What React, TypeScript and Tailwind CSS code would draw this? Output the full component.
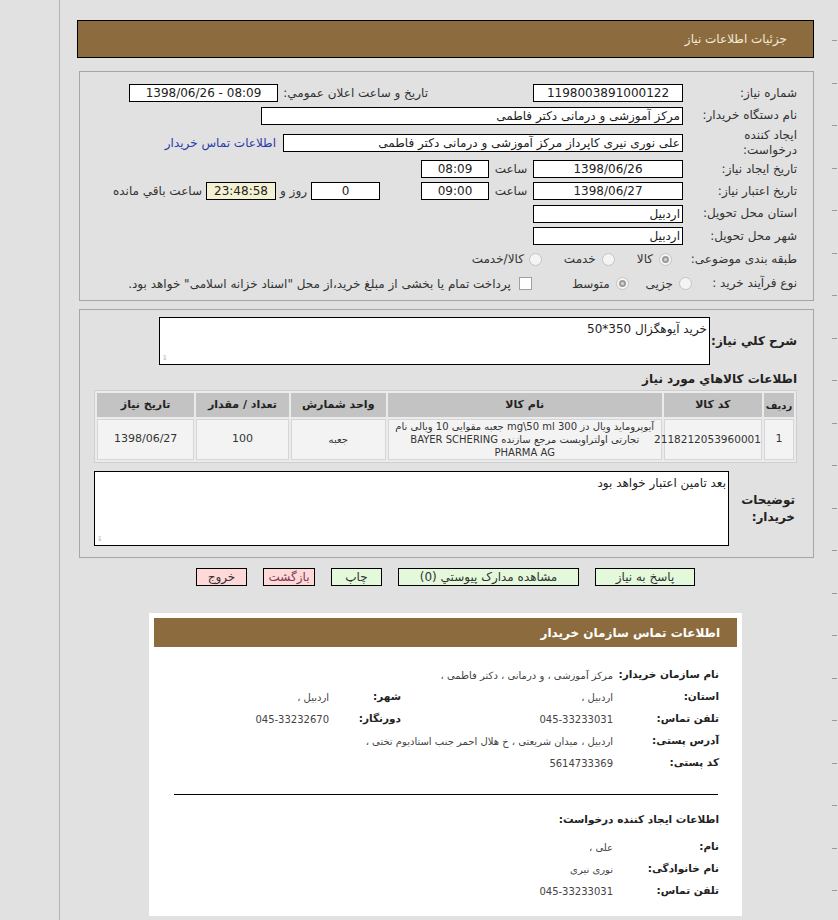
import React from 'react';

const font = "font-['Tahoma','DejaVu_Sans',sans-serif]";

const Box: React.FC<{ w: string; children?: React.ReactNode; align?: 'center' | 'right'; bg?: string }> = ({ w, children, align = 'center', bg = 'bg-white' }) => (
  <div className={`${w} h-[18px] border border-black ${bg} flex items-center px-[2px] text-[12px] text-[#222] leading-none whitespace-nowrap ${align === 'center' ? 'justify-center' : 'justify-start'}`}>
    {children}
  </div>
);

const Radio: React.FC<{ checked?: boolean }> = ({ checked }) => (
  <span className="w-[13px] h-[13px] rounded-full border border-[#c4c4c4] bg-[#f4f4f4] flex items-center justify-center shrink-0">
    {checked && <span className="w-[7px] h-[7px] rounded-full border-2 border-[#9a9a9a] bg-[#d8d8d8]" />}
  </span>
);

const Label: React.FC<{ children: React.ReactNode; w?: string }> = ({ children, w = 'w-[114px]' }) => (
  <div className={`${w} shrink-0 text-[12px] text-[#333] leading-[15px] whitespace-nowrap`}>{children}</div>
);

const InfoRow: React.FC<{ label: string; value: string; label2?: string; value2?: string }> = ({ label, value, label2, value2 }) => (
  <div className="flex items-center h-[22px]">
    <div className="w-[106px] shrink-0 text-[10.5px] font-bold text-[#222] whitespace-nowrap">{label}</div>
    <div className="w-[212px] shrink-0 text-[10px] text-[#444]">{value}</div>
    {label2 && <div className="w-[72px] shrink-0 text-[10.5px] font-bold text-[#222]">{label2}</div>}
    {value2 && <div className="text-[10px] text-[#444]">{value2}</div>}
  </div>
);

const Grip = () => (
  <span className="absolute left-[3px] bottom-[2px] text-[7px] leading-[7px] text-[#aaa] tracking-[-1px]">⁞⁞</span>
);

export default function App() {
  const cols = [
    { t: 'ردیف', w: 'w-[30px]' },
    { t: 'کد کالا', w: 'w-[98px]' },
    { t: 'نام کالا', w: 'w-[273px]' },
    { t: 'واحد شمارش', w: 'w-[95px]' },
    { t: 'تعداد / مقدار', w: 'w-[92px]' },
    { t: 'تاریخ نیاز', w: 'w-[97px]' },
  ];
  const ticks = Array.from({ length: 21 });

  return (
    <div className={`min-h-[920px] bg-[#e1e1e1] flex ${font}`}>
      <div className="w-[60px] shrink-0 border-r border-[#b2b2b2]" />
      <div dir="rtl" className="flex-1 pl-[17px] pt-[20px] pb-[20px]">
        {/* header */}
        <div className="h-[38px] border border-black bg-[#8c6c3f] flex items-center pr-[26px] text-[12px] text-[#f3ead8]">
          جزئیات اطلاعات نیاز
        </div>

        {/* main info panel */}
        <div className="mt-[13px] ml-[2px] border border-[#a6a6a6] pr-[16px] pt-[10px] pb-[4px]">
          <div className="flex items-center h-[22px]">
            <Label>شماره نیاز:</Label>
            <Box w="w-[150px]">1198003891000122</Box>
            <div className="mr-[105px] w-[150px] text-[12px] text-[#333]">تاریخ و ساعت اعلان عمومي:</div>
            <Box w="w-[149px]"><span dir="ltr">1398/06/26 - 08:09</span></Box>
          </div>
          <div className="flex items-center h-[23px]">
            <Label>نام دستگاه خریدار:</Label>
            <Box w="w-[422px]" align="right">مرکز آموزشی و درمانی دکتر فاطمی</Box>
          </div>
          <div className="flex items-center h-[31px]">
            <Label>ایجاد کننده<br />درخواست:</Label>
            <Box w="w-[400px]" align="right">علی نوری نیری کاپرداز مرکز آموزشی و درمانی دکتر فاطمی</Box>
            <span className="mr-[7px] text-[12px] text-[#2a3aa8]">اطلاعات تماس خریدار</span>
          </div>
          <div className="flex items-center h-[22px]">
            <Label>تاریخ ایجاد نیاز:</Label>
            <Box w="w-[150px]">1398/06/26</Box>
            <span className="w-[44px] text-center text-[12px] text-[#333]">ساعت</span>
            <Box w="w-[68px]">08:09</Box>
          </div>
          <div className="flex items-center h-[22px]">
            <Label>تاریخ اعتبار نیاز:</Label>
            <Box w="w-[150px]">1398/06/27</Box>
            <span className="w-[44px] text-center text-[12px] text-[#333]">ساعت</span>
            <Box w="w-[68px]">09:00</Box>
            <div className="w-[41px]" />
            <Box w="w-[69px]">0</Box>
            <span className="w-[35px] text-center text-[12px] text-[#333]">روز و</span>
            <Box w="w-[70px]" bg="bg-[#f4f0d2]">23:48:58</Box>
            <span className="mr-[4px] text-[12px] text-[#333]">ساعت باقي مانده</span>
          </div>
          <div className="flex items-center h-[23px]">
            <Label>استان محل تحویل:</Label>
            <Box w="w-[150px]" align="right">اردبیل</Box>
          </div>
          <div className="flex items-center h-[22px]">
            <Label>شهر محل تحویل:</Label>
            <Box w="w-[150px]" align="right">اردبیل</Box>
          </div>
          <div className="flex items-center h-[24px] text-[12px] text-[#333]">
            <Label w="w-[125px]">طبقه بندی موضوعی:</Label>
            <Radio checked />
            <span className="mr-[6px]">کالا</span>
            <span className="mr-[22px]"><Radio /></span>
            <span className="mr-[6px]">خدمت</span>
            <span className="mr-[22px]"><Radio /></span>
            <span className="mr-[5px]">کالا/خدمت</span>
          </div>
          <div className="flex items-center h-[25px] text-[12px] text-[#333]">
            <Label w="w-[105px]">نوع فرآیند خرید :</Label>
            <Radio />
            <span className="mr-[6px]">جزیی</span>
            <span className="mr-[17px]"><Radio checked /></span>
            <span className="mr-[6px]">متوسط</span>
            <span className="mr-[40px] w-[13px] h-[13px] border border-[#a0a0a0] bg-white shrink-0" />
            <span className="mr-[8px]">پرداخت تمام یا بخشی از مبلغ خرید،از محل "اسناد خزانه اسلامی" خواهد بود.</span>
          </div>
        </div>

        {/* goods panel */}
        <div className="mt-[8px] ml-[2px] border border-[#a6a6a6] pr-[16px] pl-[13px] pt-[7px] pb-[11px]">
          <div className="flex items-center">
            <div className="w-[87px] shrink-0 text-[12px] font-bold text-[#222] whitespace-nowrap">شرح کلي نیاز:</div>
            <div className="relative w-[551px] h-[48px] border border-black bg-white px-[2px] pt-[2px] text-[12px] text-[#222]">
              خرید آیوهگزال 350*50
              <Grip />
            </div>
          </div>
          <div className="mt-[6px] text-[12px] font-bold text-[#222] leading-[16px]">اطلاعات كالاهاي مورد نیاز</div>
          <table className="mt-[3px] w-[703px] table-fixed border border-[#cfcfcf] border-separate border-spacing-[2px] bg-[#ebebeb] text-[11px] text-[#333]">
            <thead>
              <tr>
                {cols.map((c) => (
                  <th key={c.t} className={`${c.w} h-[24px] px-0 bg-[#c3c3c3] font-bold text-[#222] text-center whitespace-nowrap ${c.t === 'ردیف' ? 'text-[10px]' : ''}`}>{c.t}</th>
                ))}
              </tr>
            </thead>
            <tbody>
              <tr className="bg-[#f3f3f3]">
                <td className="text-center h-[40px] border border-[#d6d6d6]">1</td>
                <td className="text-center text-[10.5px] border border-[#d6d6d6]">2118212053960001</td>
                <td className="text-center text-[10px] leading-[13px] px-[2px] border border-[#d6d6d6] whitespace-nowrap">
                  آیوپروماید ویال دز 300 mg\50 ml جعبه مقوایی 10 ویالی نام
                  <br />
                  تجارتی اولتراویست مرجع سازنده BAYER SCHERING
                  <br />
                  PHARMA AG
                </td>
                <td className="text-center text-[10px] border border-[#d6d6d6]">جعبه</td>
                <td className="text-center border border-[#d6d6d6]">100</td>
                <td className="text-center border border-[#d6d6d6]">1398/06/27</td>
              </tr>
            </tbody>
          </table>
          <div className="mt-[8px] flex items-center">
            <div className="w-[68px] shrink-0 text-[12px] font-bold text-[#222] leading-[17px] pr-[2px]">توضیحات<br />خریدار:</div>
            <div className="relative w-[635px] h-[75px] border border-black bg-white px-[2px] pt-[2px] text-[12px] text-[#222]">
              بعد تامین اعتبار خواهد بود
              <Grip />
            </div>
          </div>
        </div>

        {/* buttons */}
        <div className="mt-[10px] flex justify-center gap-[16px] text-[12px] text-[#333]">
          <button className="w-[100px] h-[18px] border border-black bg-[#e4f8dc] leading-none">پاسخ به نیاز</button>
          <button className="w-[181px] h-[18px] border border-black bg-[#e4f8dc] leading-none">مشاهده مدارک پیوستي (0)</button>
          <button className="w-[51px] h-[18px] border border-black bg-[#e4f8dc] leading-none">چاپ</button>
          <button className="w-[52px] h-[18px] border border-black bg-[#ffd8d8] leading-none text-[#7a3a5a] whitespace-nowrap">بازگشت</button>
          <button className="w-[51px] h-[18px] border border-black bg-[#ffd8d8] leading-none">خروج</button>
        </div>

        {/* contact card */}
        <div className="mt-[27px] mx-auto w-[593px] bg-white p-[5px] pb-[14px]">
          <div className="h-[29px] bg-[#8c6c3f] flex items-center pr-[17px] text-[12px] font-bold text-white">
            اطلاعات تماس سازمان خریدار
          </div>
          <div className="pr-[18px] pt-[17px]">
            <div className="flex items-center h-[22px]">
              <div className="w-[106px] shrink-0 text-[10.5px] font-bold text-[#222] whitespace-nowrap">نام سازمان خریدار:</div>
              <div className="text-[10px] text-[#444]">مرکز آموزشی ، و درمانی ، دکتر فاطمی ،</div>
            </div>
            <InfoRow label="استان:" value="اردبیل ،" label2="شهر:" value2="اردبیل ،" />
            <InfoRow label="تلفن تماس:" value="045-33233031" label2="دورنگار:" value2="045-33232670" />
            <div className="flex items-center h-[22px]">
              <div className="w-[106px] shrink-0 text-[10.5px] font-bold text-[#222]">آدرس پستی:</div>
              <div className="text-[10px] text-[#444]">اردبیل ، میدان شریعتی ، خ هلال احمر جنب استادیوم تختی ،</div>
            </div>
            <InfoRow label="کد پستی:" value="5614733369" />
          </div>
          <div className="mt-[20px] mr-[19px] ml-[20px] border-t border-black" />
          <div className="pr-[18px] pt-[14px]">
            <div className="h-[22px] flex items-center text-[10.5px] font-bold text-[#222]">اطلاعات ایجاد کننده درخواست:</div>
            <div className="h-[5px]" />
            <InfoRow label="نام:" value="علی ،" />
            <InfoRow label="نام خانوادگی:" value="نوری نیری" />
            <InfoRow label="تلفن تماس:" value="045-33233031" />
          </div>
        </div>
      </div>
      {/* right gutter with faint ticks */}
      <div className="w-[24px] shrink-0 pt-[40px] flex flex-col gap-[41.5px]">
        {ticks.map((_, i) => (
          <span key={i} className="block ml-auto mr-[1px] w-[5px] h-px bg-[#9a9a9a]" />
        ))}
      </div>
    </div>
  );
}
